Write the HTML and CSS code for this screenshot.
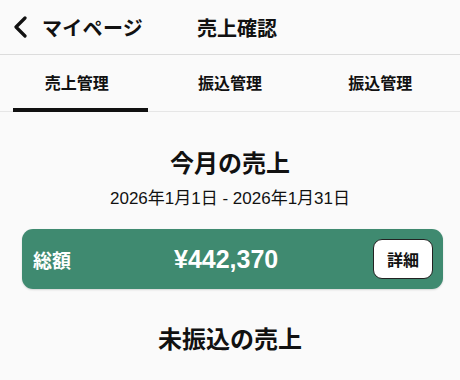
FILE: index.html
```html
<!DOCTYPE html>
<html lang="ja">
<head>
    <meta charset="UTF-8">
    <meta name="viewport" content="width=device-width, initial-scale=1.0">
    <title>売上確認</title>
    <link rel="stylesheet" href="styles.css">
</head>
<body>
    <header class="top-bar">
        <a class="back-link" href="#">
            <svg class="back-icon" width="16" height="22" viewBox="0 0 16 22">
                <path d="M12 2 L3 11 L12 20" fill="none" stroke="#111" stroke-width="3.2" stroke-linecap="round" stroke-linejoin="round"/>
            </svg>
            <span>マイページ</span>
        </a>
        <h1 class="page-title">売上確認</h1>
    </header>

    <nav class="tabs">
        <div class="tab active">売上管理</div>
        <div class="tab">振込管理</div>
        <div class="tab">振込管理</div>
    </nav>

    <main class="content">
        <h2 class="section-title">今月の売上</h2>
        <p class="period">2026年1月1日 - 2026年1月31日</p>

        <div class="total-card">
            <span class="total-label">総額</span>
            <span class="total-amount">¥442,370</span>
            <button class="detail-button">詳細</button>
        </div>

        <h2 class="section-title second">未振込の売上</h2>
    </main>
</body>
</html>
```

FILE: styles.css
```css
body {
    margin: 0;
    padding: 0;
    background-color: #fafafa;
    color: #111;
    font-family: "Liberation Sans", "Noto Sans CJK JP", sans-serif;
}

/* ヘッダー */
.top-bar {
    height: 55px;
    display: flex;
    align-items: center;
    border-bottom: 1px solid #dcdcdc;
    box-sizing: border-box;
    padding-left: 13px;
}
.back-link {
    display: flex;
    align-items: center;
    gap: 13px;
    color: #111;
    text-decoration: none;
    font-size: 20px;
    font-weight: bold;
    letter-spacing: 0.3px;
}
.back-icon {
    display: block;
}
.page-title {
    margin: 0 0 0 54px;
    font-size: 20px;
    font-weight: bold;
}

/* タブ */
.tabs {
    display: grid;
    grid-template-columns: repeat(3, 1fr);
    height: 57px;
    border-bottom: 1px solid #e6e6e6;
    box-sizing: border-box;
}
.tab {
    position: relative;
    display: flex;
    align-items: center;
    justify-content: center;
    font-size: 16px;
    font-weight: bold;
    padding-bottom: 2px;
}
.tab:last-child {
    padding-right: 6px;
}
.tab.active::after {
    content: "";
    position: absolute;
    left: 13px;
    right: 5px;
    bottom: -1px;
    height: 4px;
    background-color: #111;
}

/* メイン */
.content {
    text-align: center;
}
.section-title {
    margin: 36px 0 0;
    font-size: 24px;
    font-weight: bold;
    line-height: 32px;
}
.section-title.second {
    margin-top: 35px;
}
.period {
    margin: 7px 0 0;
    font-size: 17px;
    line-height: 24px;
}

.total-card {
    margin: 18px 17px 0 22px;
    height: 60px;
    border-radius: 11px;
    background-color: #3f8a70;
    display: flex;
    align-items: center;
    padding: 0 10px 0 11px;
    color: #fff;
    box-shadow: 0 1px 2px rgba(0,0,0,0.15);
}
.total-label {
    font-size: 19px;
    font-weight: bold;
    width: 110px;
    text-align: left;
}
.total-amount {
    flex: 1;
    font-size: 25px;
    font-weight: bold;
    text-align: left;
    padding-left: 31px;
}
.detail-button {
    width: 60px;
    height: 40px;
    background-color: #fff;
    border: 1.5px solid #222;
    border-radius: 9px;
    font-family: inherit;
    font-size: 16px;
    font-weight: bold;
    color: #111;
}
```
